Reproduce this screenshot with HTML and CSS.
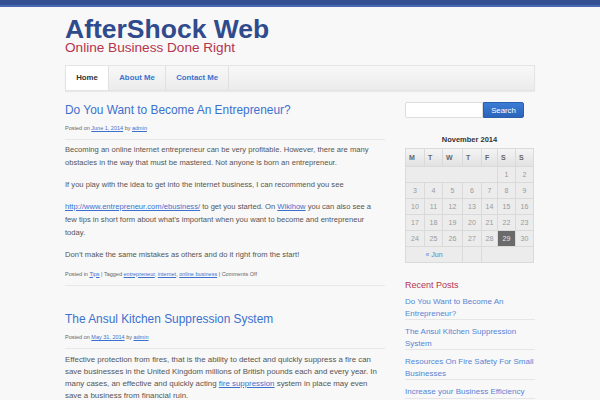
FILE: index.html
```html
<!DOCTYPE html>
<html lang="en">
<head>
<meta charset="utf-8">
<title>AfterShock Web</title>
<link rel="stylesheet" href="styles.css">
</head>
<body>
<div class="topbar"></div>
<div class="wrap">
  <header class="masthead">
    <h1 class="site-title">AfterShock Web</h1>
    <p class="tagline">Online Business Done Right</p>
  </header>
  <nav class="menu">
    <a class="tab current" href="#">Home</a><a class="tab" href="#">About Me</a><a class="tab" href="#">Contact Me</a>
  </nav>
  <div class="columns">
    <main class="main">
      <article class="post">
        <header class="post-head">
          <h2 class="post-title"><a href="#">Do You Want to Become An Entrepreneur?</a></h2>
          <p class="meta">Posted on <a href="#">June 1, 2014</a> by <a href="#">admin</a></p>
        </header>
        <div class="entry">
          <p>Becoming an online internet entrepreneur can be very profitable. However, there are many obstacles in the way that must be mastered. Not anyone is born an entrepreneur.</p>
          <p>If you play with the idea to get into the internet business, I can recommend you see</p>
          <p><a href="#">http://www.entrepreneur.com/ebusiness/</a> to get you started. On <a href="#">Wikihow</a> you can also see a few tips in short form about what’s important when you want to become and entrepreneur today.</p>
          <p>Don’t make the same mistakes as others and do it right from the start!</p>
        </div>
        <footer class="meta post-foot">Posted in <a href="#">Tips</a> | Tagged <a href="#">entrepreneur</a>, <a href="#">internet</a>, <a href="#">online business</a> | Comments Off</footer>
      </article>
      <article class="post post-alt">
        <header class="post-head">
          <h2 class="post-title"><a href="#">The Ansul Kitchen Suppression System</a></h2>
          <p class="meta">Posted on <a href="#">May 31, 2014</a> by <a href="#">admin</a></p>
        </header>
        <div class="entry">
          <p>Effective protection from fires, that is the ability to detect and quickly suppress a fire can save businesses in the United Kingdom millions of British pounds each and every year. In many cases, an effective and quickly acting <a href="#">fire suppression</a> system in place may even save a business from financial ruin.</p>
        </div>
      </article>
    </main>
    <aside class="sidebar">
      <form class="search">
        <input class="search-input" type="text" aria-label="Search"><button class="search-btn" type="button">Search</button>
      </form>
      <table class="calendar">
        <caption>November 2014</caption>
        <colgroup>
          <col class="w19"><col class="w18"><col class="w20"><col class="w19"><col class="w16"><col class="w18"><col class="w18">
        </colgroup>
        <thead>
          <tr><th>M</th><th>T</th><th>W</th><th>T</th><th>F</th><th>S</th><th>S</th></tr>
        </thead>
        <tbody>
          <tr><td colspan="5"></td><td>1</td><td>2</td></tr>
          <tr><td>3</td><td>4</td><td>5</td><td>6</td><td>7</td><td>8</td><td>9</td></tr>
          <tr><td>10</td><td>11</td><td>12</td><td>13</td><td>14</td><td>15</td><td>16</td></tr>
          <tr><td>17</td><td>18</td><td>19</td><td>20</td><td>21</td><td>22</td><td>23</td></tr>
          <tr><td>24</td><td>25</td><td>26</td><td>27</td><td>28</td><td class="today">29</td><td>30</td></tr>
        </tbody>
        <tfoot>
          <tr><td colspan="3"><a href="#">« Jun</a></td><td></td><td colspan="3"></td></tr>
        </tfoot>
      </table>
      <section class="widget">
        <h3 class="widget-title">Recent Posts</h3>
        <ul class="recent">
          <li><a href="#">Do You Want to Become An Entrepreneur?</a></li>
          <li><a href="#">The Ansul Kitchen Suppression System</a></li>
          <li><a href="#">Resources On Fire Safety For Small Businesses</a></li>
          <li><a href="#">Increase your Business Efficiency</a></li>
        </ul>
      </section>
    </aside>
  </div>
</div>
</body>
</html>
```
FILE: styles.css
```css
body {
  margin: 0;
  background: #f8f8f8;
  font-family: "Liberation Sans", Arial, Helvetica, sans-serif;
  color: #555;
}

.topbar {
  height: 5px;
  background: #344f92;
  border-bottom: 2px solid #4b68b4;
}

.wrap {
  width: 470px;
  margin: 0 auto;
}

.masthead {
  padding-top: 9px;
}

.site-title {
  margin: 0;
  font-size: 26.5px;
  line-height: 26px;
  font-weight: bold;
  color: #2f4b8e;
}

.tagline {
  margin: 0;
  font-size: 13.6px;
  line-height: 12px;
  color: #b5344f;
}

.menu {
  display: flex;
  margin-top: 11px;
  height: 24px;
  border: 1px solid #e4e4e4;
  background: linear-gradient(#f8f8f8, #ebebeb);
  box-shadow: 0 1px 1px rgba(0, 0, 0, 0.06);
}

.tab {
  padding: 0 10.2px;
  line-height: 24px;
  font-size: 7.8px;
  font-weight: bold;
  color: #3b71cf;
  text-decoration: none;
  border-right: 1px solid #e0e0e0;
}

.tab.current {
  background: #fff;
  color: #333;
}

.columns {
  display: flex;
  gap: 20px;
  align-items: flex-start;
}

.main {
  width: 320px;
  padding-top: 11.9px;
}

.post + .post {
  margin-top: 26px;
}

.post-title {
  margin: 0;
  font-size: 11.9px;
  line-height: 14px;
  font-weight: normal;
}

.post-title a {
  color: #3b71cf;
  text-decoration: none;
}

.meta {
  margin: 7.2px 0 0;
  font-size: 5.5px;
  line-height: 8px;
  color: #666;
}

.meta a,
.entry a {
  color: #3b71cf;
  text-decoration: underline;
}

.post-head {
  padding-bottom: 7px;
  border-bottom: 1px solid #e8e8e8;
}

.entry {
  padding: 2.5px 2px 0 0;
  font-size: 7.6px;
  line-height: 13px;
}

.entry p {
  margin: 0 0 9px;
}

.post-foot {
  margin: 0;
  padding-bottom: 7.4px;
  border-bottom: 1px solid #e8e8e8;
}

.post-alt .entry {
  padding-top: 5.3px;
  font-size: 7.9px;
  line-height: 11.8px;
}

.sidebar {
  width: 130px;
  padding-top: 11px;
}

.search {
  display: flex;
  height: 16px;
  margin: 0;
}

.search-input {
  box-sizing: border-box;
  width: 78px;
  height: 16px;
  margin: 0;
  padding: 0 3px;
  border: 1px solid #dcdcdc;
  border-radius: 2px 0 0 2px;
  background: #fff;
}

.search-btn {
  box-sizing: border-box;
  width: 41px;
  height: 16px;
  margin: 0;
  padding: 0;
  border: 1px solid #2a5fae;
  border-radius: 0 2px 2px 0;
  background: linear-gradient(#3b7cd6, #2a64b9);
  color: #fff;
  font-family: "Liberation Sans", Arial, sans-serif;
  font-size: 7.8px;
}

.calendar {
  margin-top: 17.4px;
  width: 129px;
  table-layout: fixed;
  border-collapse: separate;
  border-spacing: 0;
  border-top: 1px solid #dadada;
  border-left: 1px solid #dadada;
}

.calendar caption {
  font-size: 7.5px;
  font-weight: bold;
  line-height: 10px;
  padding-bottom: 2.6px;
  color: #333;
}

.w16 { width: 16px; }
.w18 { width: 18px; }
.w19 { width: 19px; }
.w20 { width: 20px; }

.calendar th,
.calendar td {
  padding: 0;
  border-right: 1px solid #dadada;
  border-bottom: 1px solid #dadada;
}

.calendar th {
  padding-left: 3px;
  line-height: 17px;
  font-size: 7px;
  font-weight: bold;
  color: #666;
  text-align: left;
  background: linear-gradient(#f4f4f4, #e2e2e2);
}

.calendar td {
  line-height: 15px;
  font-size: 7px;
  color: #999;
  text-align: center;
  background: #ececec;
}

.calendar td.today {
  background: #6a6a6a;
  color: #e6e6e6;
}

.calendar tfoot a {
  color: #5585d6;
  text-decoration: none;
}

.widget {
  margin-top: 17.4px;
}

.widget-title {
  margin: 0;
  font-size: 9px;
  line-height: 10px;
  font-weight: normal;
  color: #b5344f;
}

.recent {
  list-style: none;
  margin: 0;
  padding: 0;
}

.recent li {
  padding-top: 6px;
  border-bottom: 1px solid #e6e6e6;
  font-size: 8px;
  line-height: 11.5px;
}

.recent a {
  color: #5585d6;
  text-decoration: none;
}
```
